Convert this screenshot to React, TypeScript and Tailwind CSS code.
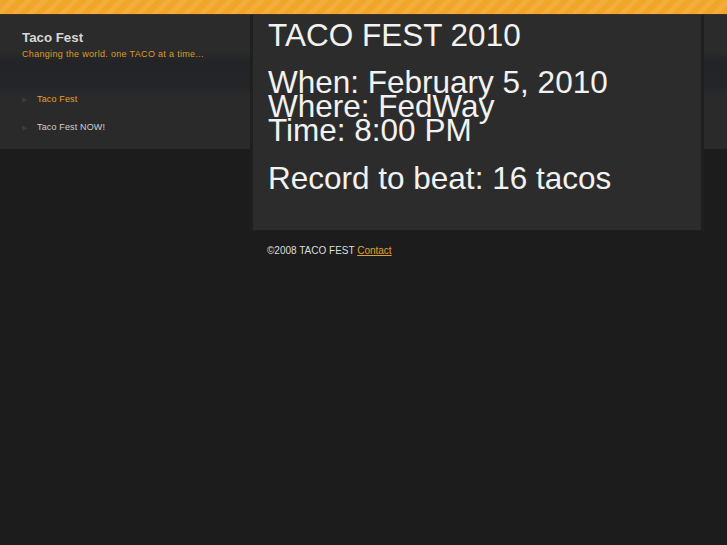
const nav = [
  { label: 'Taco Fest', active: true },
  { label: 'Taco Fest NOW!', active: false },
];

export default function App() {
  return (
    <div className="min-h-[545px] bg-[#1c1c1c] font-['Liberation_Sans',Arial,sans-serif]">
      {/* striped top bar */}
      <div className="h-[15px] border-b border-[#3b3122] bg-[#f2a52b] bg-[repeating-linear-gradient(-45deg,#f2a52b_0px,#f2a52b_6px,#f5ad3a_6px,#f5ad3a_11px)]" />

      <div className="bg-[#1c1c1c] bg-[linear-gradient(to_bottom,#2b2b2b_0px,#2b2b2b_36px,#232428_46px,#242528_72px,#2a2a2a_80px,#2a2a2a_134px,#1c1c1c_134px)]">
        <div className="flex">
          {/* sidebar */}
          <aside className="w-[250px] shrink-0 pl-[22px] pt-[15px]">
            <h1 className="text-[13.3px] font-bold leading-[16px] text-[#d6d6d6]">Taco Fest</h1>
            <p className="mt-[2px] text-[9px] leading-[12px] tracking-[0.32px] text-[#de9b27]">
              Changing the world. one TACO at a time...
            </p>
            <ul className="mt-[26px] w-[83px] border-b border-[#1d1d1d] pb-[8px]">
              {nav.map((item) => (
                <li key={item.label} className="flex h-[28px] items-center">
                  <span className="text-[7px] text-[#3c3c3c]">▶</span>
                  <span
                    className={`ml-[10px] whitespace-nowrap text-[9px] tracking-[0.15px] ${
                      item.active ? 'text-[#e3a02c]' : 'text-[#cfcfcf]'
                    }`}
                  >
                    {item.label}
                  </span>
                </li>
              ))}
            </ul>
          </aside>

          {/* main content */}
          <main className="w-[454px] shrink-0">
            <div className="border-x-[3px] border-b border-[#1f1f1f] bg-[#2c2c2c] px-[15px] pb-[40px] pt-[8px] text-[31.5px] leading-[24px] text-[#f2f2f2]">
              <h2 className="mb-[23px]">TACO FEST 2010</h2>
              <p>When: February 5, 2010</p>
              <p>Where: FedWay</p>
              <p className="mb-[24px]">Time: 8:00 PM</p>
              <p>Record to beat: 16 tacos</p>
            </div>
            <footer className="pl-[17px] pt-[14px] text-[10px] leading-[12px] text-[#dcdcdc]">
              ©2008 TACO FEST{' '}
              <a href="#" className="text-[#e3a02c] underline">
                Contact
              </a>
            </footer>
          </main>
        </div>
      </div>
    </div>
  );
}
